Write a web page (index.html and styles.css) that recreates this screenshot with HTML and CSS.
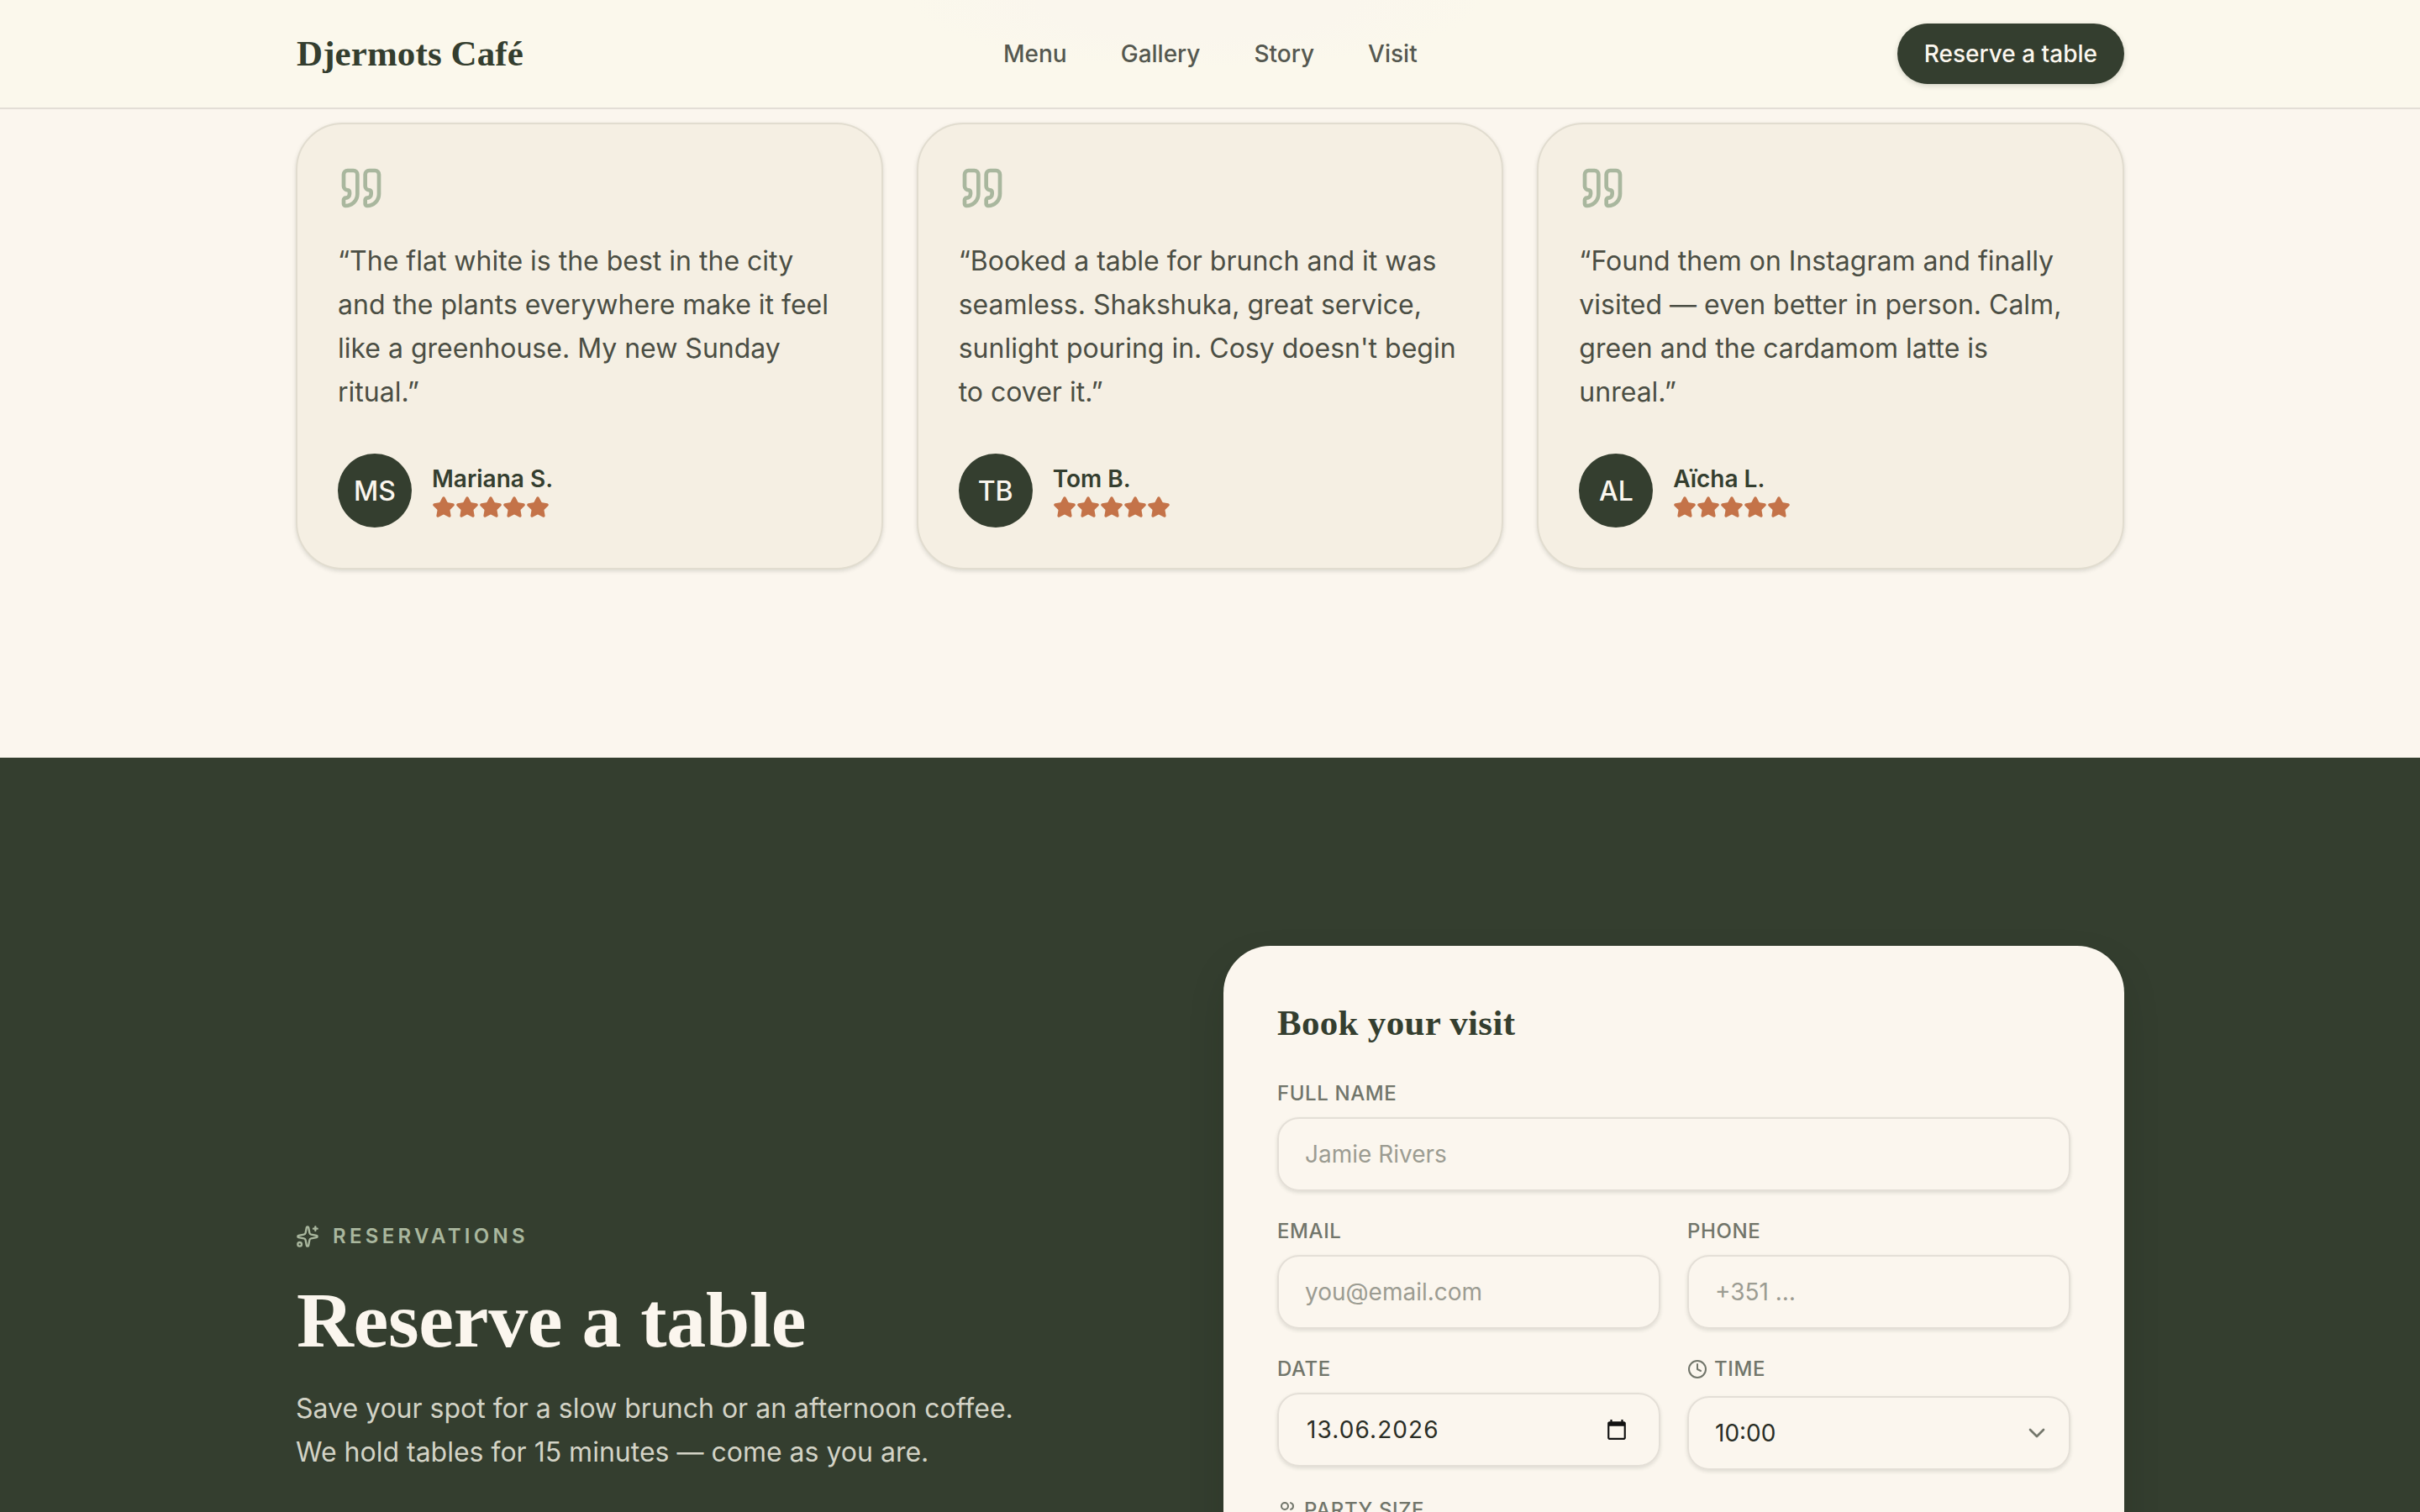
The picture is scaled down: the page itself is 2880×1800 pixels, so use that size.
FILE: index.html
```
<!DOCTYPE html>
<html lang="en">
<head>
    <meta charset="UTF-8">
    <meta name="viewport" content="width=device-width, initial-scale=1.0">
    <title>Djermots Café</title>
    <link rel="stylesheet" href="styles.css">
</head>
<body>
    <!-- shared icons -->
    <svg class="sprite" aria-hidden="true">
        <symbol id="quote" viewBox="0 0 24 24">
            <path d="M16 3a2 2 0 0 0-2 2v6a2 2 0 0 0 2 2 1 1 0 0 1 1 1v1a2 2 0 0 1-2 2 1 1 0 0 0-1 1v2a1 1 0 0 0 1 1 6 6 0 0 0 6-6V5a2 2 0 0 0-2-2z"/>
            <path d="M5 3a2 2 0 0 0-2 2v6a2 2 0 0 0 2 2 1 1 0 0 1 1 1v1a2 2 0 0 1-2 2 1 1 0 0 0-1 1v2a1 1 0 0 0 1 1 6 6 0 0 0 6-6V5a2 2 0 0 0-2-2z"/>
        </symbol>
        <symbol id="star" viewBox="0 0 24 24">
            <path d="M11.525 2.295a.53.53 0 0 1 .95 0l2.31 4.679a2.123 2.123 0 0 0 1.595 1.16l5.166.756a.53.53 0 0 1 .294.904l-3.736 3.638a2.123 2.123 0 0 0-.611 1.878l.882 5.14a.53.53 0 0 1-.771.56l-4.618-2.428a2.122 2.122 0 0 0-1.973 0L6.396 21.01a.53.53 0 0 1-.77-.56l.881-5.139a2.122 2.122 0 0 0-.611-1.879L2.16 9.795a.53.53 0 0 1 .294-.906l5.165-.755a2.122 2.122 0 0 0 1.597-1.16z"/>
        </symbol>
    </svg>

    <header class="header">
        <div class="container header-inner">
            <a class="logo">Djermots Café</a>
            <nav class="nav">
                <a>Menu</a>
                <a>Gallery</a>
                <a>Story</a>
                <a>Visit</a>
            </nav>
            <a class="btn">Reserve a table</a>
        </div>
    </header>

    <section class="reviews">
        <div class="container review-grid">
            <div class="card">
                <svg class="quote-icon"><use href="#quote"/></svg>
                <p>“The flat white is the best in the city and the plants everywhere make it feel like a greenhouse. My new Sunday ritual.”</p>
                <div class="author">
                    <span class="avatar">MS</span>
                    <div>
                        <div class="name">Mariana S.</div>
                        <div class="stars">
                            <svg><use href="#star"/></svg><svg><use href="#star"/></svg><svg><use href="#star"/></svg><svg><use href="#star"/></svg><svg><use href="#star"/></svg>
                        </div>
                    </div>
                </div>
            </div>
            <div class="card">
                <svg class="quote-icon"><use href="#quote"/></svg>
                <p>“Booked a table for brunch and it was seamless. Shakshuka, great service, sunlight pouring in. Cosy doesn't begin to cover it.”</p>
                <div class="author">
                    <span class="avatar">TB</span>
                    <div>
                        <div class="name">Tom B.</div>
                        <div class="stars">
                            <svg><use href="#star"/></svg><svg><use href="#star"/></svg><svg><use href="#star"/></svg><svg><use href="#star"/></svg><svg><use href="#star"/></svg>
                        </div>
                    </div>
                </div>
            </div>
            <div class="card">
                <svg class="quote-icon"><use href="#quote"/></svg>
                <p>“Found them on Instagram and finally visited — even better in person. Calm, green and the cardamom latte is unreal.”</p>
                <div class="author">
                    <span class="avatar">AL</span>
                    <div>
                        <div class="name">Aïcha L.</div>
                        <div class="stars">
                            <svg><use href="#star"/></svg><svg><use href="#star"/></svg><svg><use href="#star"/></svg><svg><use href="#star"/></svg><svg><use href="#star"/></svg>
                        </div>
                    </div>
                </div>
            </div>
        </div>
    </section>

    <section class="reserve">
        <div class="container reserve-grid">
            <div class="intro">
                <div class="eyebrow">
                    <svg viewBox="0 0 24 24">
                        <path d="M11.017 2.814a1 1 0 0 1 1.966 0l1.051 5.558a2 2 0 0 0 1.594 1.594l5.558 1.051a1 1 0 0 1 0 1.966l-5.558 1.051a2 2 0 0 0-1.594 1.594l-1.051 5.558a1 1 0 0 1-1.966 0l-1.051-5.558a2 2 0 0 0-1.594-1.594l-5.558-1.051a1 1 0 0 1 0-1.966l5.558-1.051a2 2 0 0 0 1.594-1.594z"/>
                        <path d="M20 2v4M22 4h-4"/>
                        <circle cx="4" cy="20" r="2"/>
                    </svg>
                    <span>Reservations</span>
                </div>
                <h2>Reserve a table</h2>
                <p>Save your spot for a slow brunch or an afternoon coffee.<br>We hold tables for 15 minutes — come as you are.</p>
            </div>

            <form class="booking">
                <h3>Book your visit</h3>
                <div class="field wide">
                    <label>Full name</label>
                    <div class="input placeholder">Jamie Rivers</div>
                </div>
                <div class="field">
                    <label>Email</label>
                    <div class="input placeholder">you@email.com</div>
                </div>
                <div class="field">
                    <label>Phone</label>
                    <div class="input placeholder">+351 …</div>
                </div>
                <div class="field">
                    <label>Date</label>
                    <div class="input date">
                        <span>13.06.2026</span>
                        <svg viewBox="0 0 24 24"><path d="M20 3h-1V1h-2v2H7V1H5v2H4c-1.100 0-2 .9-2 2v16c0 1.100.9 2 2 2h16c1.100 0 2-.9 2-2V5c0-1.100-.9-2-2-2zm0 18H4V8h16v13z"/></svg>
                    </div>
                </div>
                <div class="field">
                    <label class="with-icon">
                        <svg viewBox="0 0 24 24"><circle cx="12" cy="12" r="10"/><path d="M12 6v6l4 2"/></svg>
                        Time
                    </label>
                    <div class="input select">
                        <span>10:00</span>
                        <svg viewBox="0 0 24 24"><path d="m6 9 6 6 6-6"/></svg>
                    </div>
                </div>
                <div class="field wide">
                    <label class="with-icon">
                        <svg viewBox="0 0 24 24"><path d="M16 21v-2a4 4 0 0 0-4-4H6a4 4 0 0 0-4 4v2M16 3.128a4 4 0 0 1 0 7.744M22 21v-2a4 4 0 0 0-3-3.870"/><circle cx="9" cy="7" r="4"/></svg>
                        Party size
                    </label>
                </div>
            </form>
        </div>
    </section>
</body>
</html>
```
FILE: styles.css
```
* {
    box-sizing: border-box;
    margin: 0;
    padding: 0;
}
body {
    font-family: Inter, "Liberation Sans", sans-serif;
    font-size: 32px;
    line-height: 52px;
    background: #fbf6ee;
    color: #2a2e26;
    height: 100vh;
    overflow: hidden;
}
svg {
    display: block;
    flex-shrink: 0;
    fill: none;
    stroke: currentColor;
    stroke-width: 2;
    stroke-linecap: round;
    stroke-linejoin: round;
}
.sprite {
    display: none;
}
.container {
    width: 2176px;
    margin: 0 auto;
}

/* header */
.header {
    height: 130px;
    border-bottom: 2px solid #e3ded6;
    background: radial-gradient(ellipse 340px 80px at 1424px 0, #faf6ed 55%, rgba(250, 246, 237, 0)), #fbf8ec;
}
.header-inner {
    height: 128px;
    display: flex;
    align-items: center;
    justify-content: space-between;
}
.logo,
h2,
h3 {
    font-family: "Liberation Serif", serif;
    font-weight: 700;
}
.logo {
    padding-left: 1px;
    font-size: 43px;
    letter-spacing: 0.1px;
    color: #343e2f;
}
.nav {
    display: flex;
    gap: 64px;
    font-size: 28px;
    font-weight: 500;
    color: #555850;
}
.btn {
    height: 72px;
    padding: 0 32px;
    border-radius: 36px;
    display: flex;
    align-items: center;
    font-size: 28px;
    font-weight: 500;
    background: #343e2f;
    color: #fbf6ee;
    box-shadow: 0 2px 6px rgba(52, 62, 47, 0.2);
}

/* reviews */
.reviews {
    padding: 16px 0 224px;
}
.review-grid {
    display: grid;
    grid-template-columns: repeat(3, 1fr);
    gap: 40px;
}
.card {
    padding: 48px;
    border: 2px solid #e1dccf;
    border-radius: 56px;
    background: #f5efe3;
    box-shadow: 0 2px 5px rgba(52, 62, 47, 0.16);
}
.quote-icon {
    width: 56px;
    height: 56px;
    color: #a9b79e;
}
.card p {
    margin: 33px 0 47px;
    color: #4b4e44;
}
.author {
    display: flex;
    align-items: center;
    gap: 24px;
}
.avatar {
    width: 88px;
    height: 88px;
    padding-top: 1px;
    border-radius: 50%;
    display: flex;
    align-items: center;
    justify-content: center;
    font-weight: 500;
    background: #343e2f;
    color: #fbf6ee;
}
.name {
    font-size: 28px;
    line-height: 40px;
    font-weight: 600;
    color: #343e2f;
}
.stars {
    display: flex;
}
.stars svg {
    width: 28px;
    height: 28px;
    fill: #c47349;
    color: #c47349;
}

/* reservation */
.reserve {
    padding: 224px 0;
    background: #343e2f;
}
.reserve-grid {
    display: grid;
    grid-template-columns: 1fr 1fr;
    gap: 32px;
}
.intro {
    padding-top: 330px;
    color: #d3d3c6;
}
.eyebrow {
    display: flex;
    align-items: center;
    gap: 16px;
    height: 32px;
    font-size: 24px;
    font-weight: 600;
    letter-spacing: 4.3px;
    text-transform: uppercase;
    color: #a9b79e;
}
.eyebrow svg {
    width: 28px;
    height: 28px;
}
h2 {
    margin: 35px 0 32px;
    padding-left: 1px;
    font-size: 94px;
    line-height: 96px;
    letter-spacing: -0.3px;
    color: #fbf6ee;
}
.booking {
    display: grid;
    grid-template-columns: 1fr 1fr;
    gap: 32px;
    align-items: start;
    padding: 64px;
    border-radius: 56px;
    background: #fbf6ee;
    box-shadow: 0 20px 50px -12px rgba(20, 28, 16, 0.25);
}
h3 {
    grid-column: 1 / -1;
    margin-bottom: 8px;
    font-size: 43px;
    line-height: 56px;
    letter-spacing: 0.3px;
    color: #343e2f;
}
.wide {
    grid-column: 1 / -1;
}
label {
    display: block;
    margin-bottom: 12px;
    font-size: 24px;
    line-height: 32px;
    font-weight: 500;
    letter-spacing: 0.6px;
    text-transform: uppercase;
    color: #71756a;
}
.with-icon {
    display: flex;
    gap: 8px;
    height: 36px;
}
.with-icon svg {
    width: 24px;
    height: 24px;
    margin-top: 4px;
}
.input {
    display: flex;
    align-items: center;
    justify-content: space-between;
    height: 88px;
    padding: 0 32px 0 31px;
    border: 2px solid #e4dfd7;
    border-radius: 26px;
    font-size: 28px;
    color: #2a2e26;
    box-shadow: 0 2px 4px rgba(52, 62, 47, 0.14);
}
.placeholder {
    color: #9c9c92;
}
.date span {
    padding-left: 2px;
    letter-spacing: 1.1px;
}
.date svg {
    width: 26px;
    height: 26px;
    margin-right: 5px;
    fill: #111;
    stroke: none;
}
.select {
    padding-right: 22px;
}
.select svg {
    width: 32px;
    height: 32px;
    color: #74776c;
}
```
